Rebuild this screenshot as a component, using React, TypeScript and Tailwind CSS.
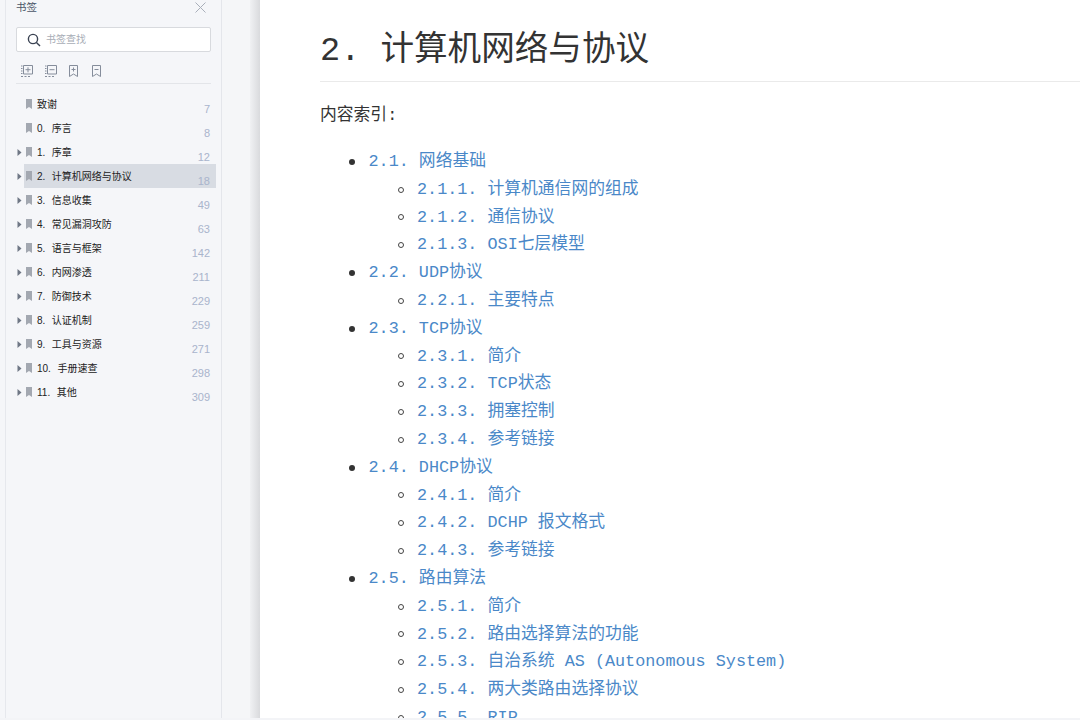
const bookmarks = [
  { num: '', title: '致谢', page: 7, arrow: false },
  { num: '0.', title: '序言', page: 8, arrow: false },
  { num: '1.', title: '序章', page: 12, arrow: true },
  { num: '2.', title: '计算机网络与协议', page: 18, arrow: true, active: true },
  { num: '3.', title: '信息收集', page: 49, arrow: true },
  { num: '4.', title: '常见漏洞攻防', page: 63, arrow: true },
  { num: '5.', title: '语言与框架', page: 142, arrow: true },
  { num: '6.', title: '内网渗透', page: 211, arrow: true },
  { num: '7.', title: '防御技术', page: 229, arrow: true },
  { num: '8.', title: '认证机制', page: 259, arrow: true },
  { num: '9.', title: '工具与资源', page: 271, arrow: true },
  { num: '10.', title: '手册速查', page: 298, arrow: true },
  { num: '11.', title: '其他', page: 309, arrow: true },
];

const toc = [
  { level: 1, text: '2.1. 网络基础' },
  { level: 2, text: '2.1.1. 计算机通信网的组成' },
  { level: 2, text: '2.1.2. 通信协议' },
  { level: 2, text: '2.1.3. OSI七层模型' },
  { level: 1, text: '2.2. UDP协议' },
  { level: 2, text: '2.2.1. 主要特点' },
  { level: 1, text: '2.3. TCP协议' },
  { level: 2, text: '2.3.1. 简介' },
  { level: 2, text: '2.3.2. TCP状态' },
  { level: 2, text: '2.3.3. 拥塞控制' },
  { level: 2, text: '2.3.4. 参考链接' },
  { level: 1, text: '2.4. DHCP协议' },
  { level: 2, text: '2.4.1. 简介' },
  { level: 2, text: '2.4.2. DCHP 报文格式' },
  { level: 2, text: '2.4.3. 参考链接' },
  { level: 1, text: '2.5. 路由算法' },
  { level: 2, text: '2.5.1. 简介' },
  { level: 2, text: '2.5.2. 路由选择算法的功能' },
  { level: 2, text: '2.5.3. 自治系统 AS (Autonomous System)' },
  { level: 2, text: '2.5.4. 两大类路由选择协议' },
  { level: 2, text: '2.5.5. RIP' },
];

function ToolIcon({ kind }: { kind: 'expand' | 'collapse' | 'markAdd' | 'markRemove' }) {
  const stroke = '#858d9b';
  if (kind === 'expand' || kind === 'collapse') {
    return (
      <svg width="12" height="12" viewBox="0 0 12 12" fill="none" stroke={stroke} strokeWidth="1" className="block">
        <path d="M2.5 0.5h9v8.5h-9z" />
        <path d="M0 1h1.5M0 3.5h1.5M0 6h1.5M0 8.5h1.5M0 11.5h2M3.5 11.5h2M7 11.5h2" />
        <path d="M4.5 4.7h5" />
        {kind === 'expand' && <path d="M7 2.3v5" />}
      </svg>
    );
  }
  return (
    <svg width="9" height="12" viewBox="0 0 9 12" fill="none" stroke={stroke} strokeWidth="1" className="block">
      <path d="M0.5 0.5h8v11l-4-2.5-4 2.5z" />
      <path d="M2.5 4.5h4" />
      {kind === 'markAdd' && <path d="M4.5 2.5v4" />}
    </svg>
  );
}

export default function App() {
  return (
    <div className="w-[1080px] h-[720px] overflow-hidden flex flex-col bg-[#f3f4f7]">
      <div className="flex h-[718px]">
        {/* left rail */}
        <div className="w-[6px] bg-[#f5f6f9] border-r border-[#e6e8ed]" />

        {/* bookmark panel */}
        <aside className="w-[216px] bg-[#f5f6f9] border-r border-[#e4e6eb] font-['Liberation_Sans','Noto_Sans_CJK_SC',sans-serif]">
          <div className="h-[14px] pt-[1px] pl-[10px] pr-[15px] flex items-center justify-between text-[10.5px] text-[#4a5568]">
            <span>书签</span>
            <svg width="11" height="11" viewBox="0 0 11 11" stroke="#a9afba" strokeWidth="1">
              <path d="M0.5 0.5l10 10M10.5 0.5l-10 10" />
            </svg>
          </div>
          <div className="mt-[13px] ml-[10px] w-[195px] h-[25px] bg-white border border-[#d8dade] rounded-[2px] flex items-center pl-[10px]">
            <svg width="14" height="14" viewBox="0 0 14 14" fill="none" stroke="#3a4252" strokeWidth="1.4">
              <circle cx="6" cy="6" r="4.6" />
              <path d="M9.4 9.4l3.6 3.6" />
            </svg>
            <span className="ml-[5px] text-[10px] text-[#a8adb6]">书签查找</span>
          </div>
          <div className="mt-[12px] ml-[10px] w-[195px] h-[20px] border-b border-[#e3e5e9] pl-[5px] pt-[1px] flex items-start">
            <div className="flex gap-[12px]">
              <ToolIcon kind="expand" />
              <ToolIcon kind="collapse" />
              <ToolIcon kind="markAdd" />
            </div>
            <div className="ml-[14px]">
              <ToolIcon kind="markRemove" />
            </div>
          </div>
          <ul className="mt-[8px]">
            {bookmarks.map((b) => (
              <li key={b.title} className="flex items-center h-[24px]">
                <div className="w-[18px] pl-[11px] shrink-0">
                  {b.arrow && (
                    <svg width="5" height="7" viewBox="0 0 5 7" className="block">
                      <path d="M0.5 0l4 3.5-4 3.5z" fill="#6f7785" />
                    </svg>
                  )}
                </div>
                <div className={`w-[192px] h-[24px] flex items-center pl-[2px] pr-[6px] ${b.active ? 'bg-[#d8dce3]' : ''}`}>
                  <svg width="6" height="10" viewBox="0 0 6 10" className="shrink-0">
                    <path d="M0 0h6v10l-3-2-3 2z" fill="#a3a8b1" />
                  </svg>
                  <span className="ml-[5px] flex text-[10px] text-[#222] whitespace-nowrap">
                    {b.num && <span className="mr-[6.5px]">{b.num}</span>}
                    <span>{b.title}</span>
                  </span>
                  <span className="ml-auto mt-[10px] text-[11px] text-[#a9b4cc]">{b.page}</span>
                </div>
              </li>
            ))}
          </ul>
        </aside>

        {/* gutter + page shadow */}
        <div className="w-[28px] bg-[#f5f6f8]" />
        <div className="w-[10px] bg-gradient-to-r from-[#f0f1f3] to-[#d9dadd]" />

        {/* document page */}
        <main className="flex-1 bg-white pl-[60px] font-['Liberation_Mono','Noto_Sans_CJK_SC',monospace] text-[#333] overflow-hidden">
          <h1 className="h-[82px] pt-[32px] text-[33.6px] leading-[38px] whitespace-pre border-b border-[#eaeaea]">2. 计算机网络与协议</h1>
          <p className="mt-[20px] text-[16.8px] leading-[27px]">内容索引:</p>
          <ul className="mt-[19px] text-[16.8px] leading-[27.8px] whitespace-pre">
            {toc.map((item) => (
              <li key={item.text} className={`flex items-center ${item.level === 1 ? 'pl-[29px]' : 'pl-[78px]'}`}>
                <span className={item.level === 1 ? 'w-[6px] h-[6px] rounded-full bg-[#333]' : 'w-[6px] h-[6px] rounded-full border-[1.5px] border-[#444]'} />
                <span className={`text-[#4a88c8] ${item.level === 1 ? 'ml-[13.5px]' : 'ml-[13px]'}`}>{item.text}</span>
              </li>
            ))}
          </ul>
        </main>
      </div>
    </div>
  );
}
